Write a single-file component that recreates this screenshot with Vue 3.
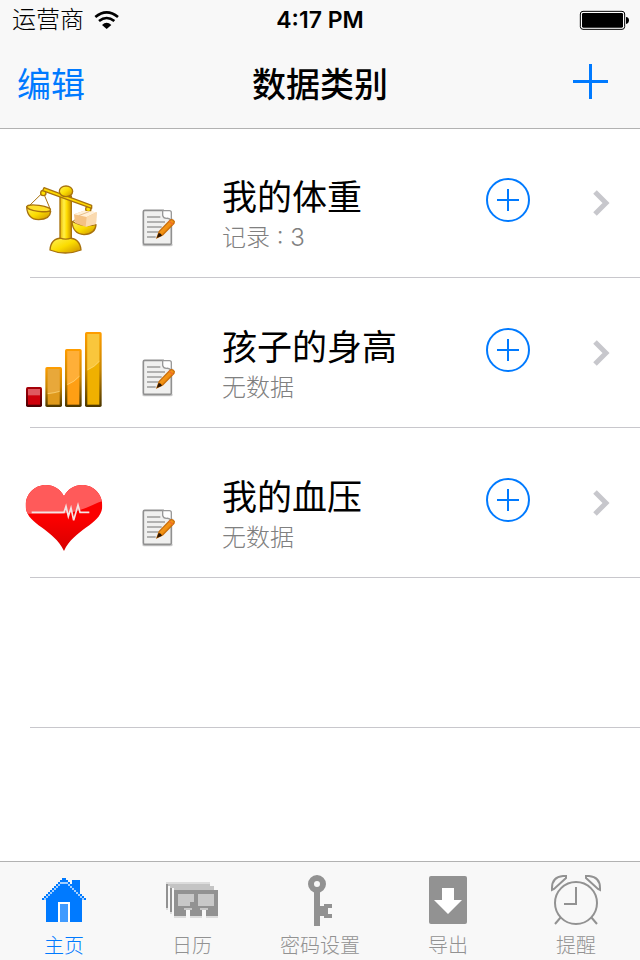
<template>
  <div class="app">
    <header class="top">
      <!-- STATUS BAR -->
      <div class="status">
        <div class="carrier">
          <span>运营商</span>
          <svg width="26" height="20" viewBox="282 30 78 60" aria-hidden="true">
            <path d="M286 51Q320 23 354 51" fill="none" stroke="#000" stroke-width="8" />
            <path d="M297 63Q320 45 343 63" fill="none" stroke="#000" stroke-width="8" />
            <path d="M306 75Q320 61 334 75L320 87z" />
          </svg>
        </div>
        <span class="time">4:17 PM</span>
        <svg class="battery" width="51" height="20" viewBox="777 30 153 60" aria-hidden="true">
          <rect x="781" y="34" width="133" height="54" rx="8" fill="#fff" stroke="#000" stroke-width="3" />
          <rect x="786" y="39" width="123" height="44" rx="4" />
          <path d="M918 51q9 1 9 10t-9 11z" />
        </svg>
      </div>

      <!-- NAV BAR -->
      <nav class="nav">
        <button class="nav-edit" @click="editing = !editing">编辑</button>
        <h1>数据类别</h1>
        <button class="nav-add" aria-label="添加类别">
          <svg width="36" height="42" viewBox="0 0 36 42">
            <path d="M1 16h35v3H1zM17 0h3v35h-3z" fill="#007aff" />
          </svg>
        </button>
      </nav>
    </header>

    <!-- CATEGORY LIST -->
    <main>
      <ul class="list">
        <li v-for="item in categories" :key="item.id" class="row">
          <svg v-if="item.id === 'weight'" class="row-icon" viewBox="27 30 234 234" aria-hidden="true">
            <defs>
              <linearGradient id="gold" x1="0" x2="1" y1="0" y2="0">
                <stop offset="0" stop-color="#e8b400" />
                <stop offset="0.35" stop-color="#fff04a" />
                <stop offset="0.6" stop-color="#ffdc00" />
                <stop offset="1" stop-color="#c99200" />
              </linearGradient>
              <linearGradient id="bowl" x1="0" x2="1" y1="0" y2="1">
                <stop offset="0" stop-color="#fff25c" />
                <stop offset="0.5" stop-color="#fbdc00" />
                <stop offset="1" stop-color="#c98c00" />
              </linearGradient>
            </defs>
            <g stroke="#a8720c" stroke-width="4" stroke-linejoin="round">
              <path d="M80 68L35 112M82 68L103 118M215 120L171 154M218 120L238 164" fill="none" stroke-width="3" />
              <path d="M102 240q2-36 38-36h16q36 0 39 36-22 9-47 9t-46-9z" fill="url(#bowl)" />
              <path d="M132 78h34v126q-17 7-34 0z" fill="url(#gold)" />
              <circle cx="82" cy="69" r="8" fill="#ffe100" />
              <circle cx="217" cy="117" r="8" fill="#ffe100" />
              <path d="M84 53L227 106v9L80 62z" fill="#ffd900" />
              <ellipse cx="150" cy="64" rx="20" ry="16" fill="url(#bowl)" />
              <path d="M32 110q2 38 36 39 34-1 36-25-30 2-72-14z" fill="url(#bowl)" />
              <ellipse cx="68" cy="115" rx="36" ry="9" fill="#ffe02a" transform="rotate(8 68 115)" />
              <path d="M168 154q2 38 36 40 34-2 36-30-38 8-72-10z" fill="url(#bowl)" />
            </g>
            <path d="M174 133l30-11 38 5-2 35-31 8-32-11z" fill="#f4c184" />
            <path d="M174 133l30-11 38 5-30 14z" fill="#fff0d8" />
            <path d="M212 141l30-14-2 35-31 8z" fill="#fadab0" />
            <path d="M188 137l31-12" stroke="#e7bd8b" stroke-width="3" />
          </svg>

          <svg v-else-if="item.id === 'height'" class="row-icon" viewBox="27 30 234 234" aria-hidden="true">
            <defs>
              <linearGradient id="bar-edge" x1="0" x2="0" y1="0" y2="1">
                <stop offset="0" stop-color="#ff9d00" />
                <stop offset="0.5" stop-color="#c78500" />
                <stop offset="1" stop-color="#4b3600" />
              </linearGradient>
              <linearGradient id="red-edge" x1="0" x2="0" y1="0" y2="1">
                <stop offset="0" stop-color="#a90008" />
                <stop offset="1" stop-color="#480004" />
              </linearGradient>
            </defs>
            <rect x="30" y="201" width="48" height="60" rx="5" fill="url(#red-edge)" />
            <rect x="36" y="207" width="36" height="47" fill="#cf000b" />
            <path d="M36 207h36v19H36z" fill="#df5960" />
            <g v-for="bar in bars" :key="bar.x">
              <rect :x="bar.x" :y="bar.y" width="50" :height="261 - bar.y" rx="5" fill="url(#bar-edge)" />
              <rect :x="bar.x + 7" :y="bar.y + 6" width="36" :height="248 - bar.y" :fill="bar.base" />
              <path :d="bar.shine" :fill="bar.light" />
              <path :d="bar.line" fill="none" stroke="#ffe08a" stroke-width="2" />
            </g>
          </svg>

          <svg v-else class="row-icon" viewBox="27 30 234 234" aria-hidden="true">
            <defs>
              <linearGradient id="heart-red" x1="0" x2="0" y1="0" y2="1">
                <stop offset="0.5" stop-color="#fb0000" />
                <stop offset="1" stop-color="#d40000" />
              </linearGradient>
              <clipPath id="heart-clip">
                <path d="M144 79C133 57 113 45 90 45 55 45 29 72 29 107 29 164 112 174 144 243 176 174 259 164 259 107 259 72 233 45 198 45 175 45 155 57 144 79z" />
              </clipPath>
            </defs>
            <g clip-path="url(#heart-clip)">
              <rect x="27" y="40" width="234" height="210" fill="url(#heart-red)" />
              <path d="M27 40h234v52C225 104 190 130 130 131H27z" fill="#ff5a5a" />
            </g>
            <path d="M47 127h97l6-18 7 30 8-25 8 37 13-46 6 22h28" fill="none" stroke="#f4e4e4" stroke-width="5" />
          </svg>

          <button class="note" aria-label="编辑记录">
            <svg width="36" height="40" viewBox="375 114 108 120">
              <defs>
                <linearGradient id="pencil" x1="0" x2="1" y1="0" y2="1">
                  <stop offset="0" stop-color="#ffb648" />
                  <stop offset="0.6" stop-color="#f08a08" />
                  <stop offset="1" stop-color="#a85300" />
                </linearGradient>
              </defs>
              <rect x="379" y="219" width="91" height="10" rx="5" fill="#c8c8c8" />
              <path d="M386 121h56l24 24v74q0 4-4 4h-76q-4 0-4-4v-94q0-4 4-4z" fill="#f0f0ef" stroke="#909090" stroke-width="5" />
              <path d="M440 122h20q6 0 6 6v24q-6-9-15-7-9 0-11-9z" fill="#fff" stroke="#999" stroke-width="4" />
              <path d="M393 141h40M393 156h54M393 171h44M393 186h36M393 201h26" stroke="#9c9c9c" stroke-width="5" />
              <path d="M423 203l7-19 33-34q4-3 9 1t2 9l-34 35z" fill="url(#pencil)" stroke="#c96f0c" stroke-width="4" />
              <path d="M422 204l6-15q8 0 10 8z" fill="#2b1604" />
              <path d="M459 153l12 11" stroke="#ef6c2d" stroke-width="4" />
            </svg>
          </button>

          <a class="info" href="#">
            <span class="name">{{ item.name }}</span>
            <span class="detail">{{ item.count ? `记录 : ${item.count}` : '无数据' }}</span>
          </a>

          <button class="add" aria-label="添加记录" @click="item.count++">
            <svg width="44" height="44" viewBox="0 0 44 44" fill="none" stroke="#007aff" stroke-width="2">
              <circle cx="22" cy="22" r="21" />
              <path d="M11 22h22M22 11v22" />
            </svg>
          </button>

          <svg class="chevron" width="20" height="50" viewBox="0 0 20 50" aria-hidden="true">
            <path d="M3 14l11 11L3 36" fill="none" stroke="#c7c7cc" stroke-width="5" />
          </svg>
        </li>
        <li class="row"></li>
      </ul>
    </main>

    <!-- TAB BAR -->
    <nav class="tabs">
      <button
        v-for="tab in tabs"
        :key="tab.id"
        class="tab"
        :class="{ active: tab.id === activeTab }"
        @click="activeTab = tab.id"
      >
        <svg width="60" height="60" viewBox="0 0 60 60" fill="currentColor" aria-hidden="true">
          <g v-if="tab.id === 'home'" shape-rendering="crispEdges">
            <path d="M8 30v-2h2v-2h2v-2h2v-2h2v-2h2v-2h2v-2h2v-2h2v-2h2v-2h2V8h4v2h2v2h2v2h2v-4h8v14h2v2h2v2h2v2h-4v22H12V30z" />
            <g fill="#a3cfff">
              <rect v-for="n in 9" :key="n" :x="8 + n * 2" :y="30 - n * 2" width="2" height="2" />
              <rect v-for="n in 9" :key="n + 9" :x="50 - n * 2" :y="30 - n * 2" width="2" height="2" />
              <rect x="28" y="12" width="4" height="2" />
            </g>
            <path d="M24 32h12v20H24z" fill="#fff" />
            <path d="M26 34h8v18h-8z" fill="#409bff" />
          </g>
          <g v-else-if="tab.id === 'calendar'" shape-rendering="crispEdges">
            <path d="M4 12h44v2H4zM4 38h2v2H4zM8 42h2v2H8zM12 46h44v2H12z" fill="#dcdcdc" />
            <path d="M6 14h42v2h4v4H12v-2H8v-2H6z" fill="#c4c4c4" />
            <path d="M4 14h2v24H4zM8 18h2v24H8zM12 20h44v26H12z" />
            <path d="M16 24h16v8h-4v4H16zM36 24h16v12H36z" fill="#c8c8c8" />
            <path d="M22 38h8v2h-8zM38 38h8v2h-8z" fill="#c8c8c8" />
            <path d="M24 40h4v8h-4zM40 40h4v8h-4z" fill="#f8f8f8" />
          </g>
          <g v-else-if="tab.id === 'password'">
            <circle cx="27" cy="14" r="6" fill="none" stroke="currentColor" stroke-width="6" />
            <path d="M24 22h6v14h4v-2h8v4h-4v6h4v4h-8v-2h-4v10h-6z" />
          </g>
          <g v-else-if="tab.id === 'export'">
            <rect x="11" y="6" width="38" height="48" rx="2" />
            <path d="M24 18h12v12h8L30 44 16 30h8z" fill="#fff" />
          </g>
          <g v-else fill="none" stroke="currentColor" stroke-width="2">
            <circle cx="30" cy="33" r="21" />
            <path d="M30 17v17H18M15 47l-6 7M45 47l6 7" />
            <path d="M20 6h-3Q6 7 6 18v2l2-1L20 8zM40 6h3q11 1 11 12v2l-2-1L40 8z" />
          </g>
        </svg>
        <span>{{ tab.label }}</span>
      </button>
    </nav>
  </div>
</template>

<script setup>
import { ref } from "vue";

const editing = ref(false);
const activeTab = ref("home");

const categories = ref([
  { id: "weight", name: "我的体重", count: 3 },
  { id: "height", name: "孩子的身高", count: 0 },
  { id: "pressure", name: "我的血压", count: 0 },
]);

const tabs = [
  { id: "home", label: "主页" },
  { id: "calendar", label: "日历" },
  { id: "password", label: "密码设置" },
  { id: "export", label: "导出" },
  { id: "alarm", label: "提醒" },
];

// golden bars of the height icon
const bars = [
  { x: 88, y: 141, base: "#e09a1c", light: "#e8a83a", shine: "M95 147h36v67q-16 5-36 7z", line: "M95 221q20-2 36-7" },
  { x: 147, y: 87, base: "#ff9f14", light: "#ffaf38", shine: "M154 93h36v76q-14 16-36 25z", line: "M154 194q22-9 36-25" },
  { x: 207, y: 36, base: "#f0b000", light: "#f9c63c", shine: "M214 42h36v82q-14 17-36 26z", line: "M214 150q22-9 36-26" },
];
</script>

<style>
body {
  background: #fff;
}
</style>

<style scoped>
.app {
  min-height: 100vh;
  display: flex;
  flex-direction: column;
  font-family: "Liberation Sans", "Noto Sans CJK SC", sans-serif;
  color: #000;
}
button {
  padding: 0;
  border: none;
  background: none;
  font-family: inherit;
  cursor: pointer;
}
svg {
  display: block;
  flex-shrink: 0;
}

/* HEADER */
.top {
  background: #f8f8f8;
  box-shadow: 0 1px 0 #b2b2b2;
}
.status {
  display: grid;
  grid-template-columns: 1fr auto 1fr;
  align-items: center;
  height: 40px;
  padding: 0 10px;
}
.carrier {
  display: flex;
  align-items: center;
  gap: 10px;
  padding-left: 2px;
  font-size: 24px;
  font-weight: 300;
  line-height: 22px;
}
.time {
  font-family: Inter, "Liberation Sans", sans-serif;
  font-size: 23px;
  font-weight: 600;
}
.battery {
  justify-self: end;
}
.nav {
  display: grid;
  grid-template-columns: 1fr auto 1fr;
  align-items: center;
  box-sizing: border-box;
  height: 88px;
  padding: 2px 17px 0;
}
.nav-edit {
  justify-self: start;
  font-size: 34px;
  line-height: 40px;
  color: #007aff;
}
.nav h1 {
  margin: 0;
  font-size: 34px;
  font-weight: 500;
  line-height: 40px;
}
.nav-add {
  justify-self: end;
  padding-right: 15px;
}

/* LIST */
main {
  flex: 1;
}
.list {
  margin: 0;
  padding: 0;
  list-style: none;
}
.row {
  display: flex;
  align-items: flex-start;
  box-sizing: border-box;
  min-height: 150px;
  padding: 50px 28px 20px 25px;
  background: linear-gradient(#c8c7cc, #c8c7cc) 30px 100% / 100% 1px no-repeat;
}
.row-icon {
  width: 78px;
  height: 78px;
  margin-top: 2px;
}
.note {
  margin: 30px 45px 0 38px;
}
.info {
  flex: 1;
  display: flex;
  flex-direction: column;
  line-height: 40px;
  color: inherit;
  text-decoration: none;
}
.name {
  font-size: 35px;
}
.detail {
  font-family: Inter, "Noto Sans CJK SC", sans-serif;
  font-size: 24px;
  font-weight: 300;
  color: #808080;
}
.chevron {
  margin-left: 62px;
}

/* TAB BAR */
.tabs {
  display: grid;
  grid-template-columns: repeat(5, 1fr);
  border-top: 1px solid #b2b2b2;
  background: #f8f8f8;
}
.tab {
  display: flex;
  flex-direction: column;
  align-items: center;
  gap: 4px;
  padding: 8px 0 2px;
  font-size: 20px;
  font-weight: 300;
  line-height: 24px;
  color: #929292;
}
.tab.active {
  color: #007aff;
}
</style>
